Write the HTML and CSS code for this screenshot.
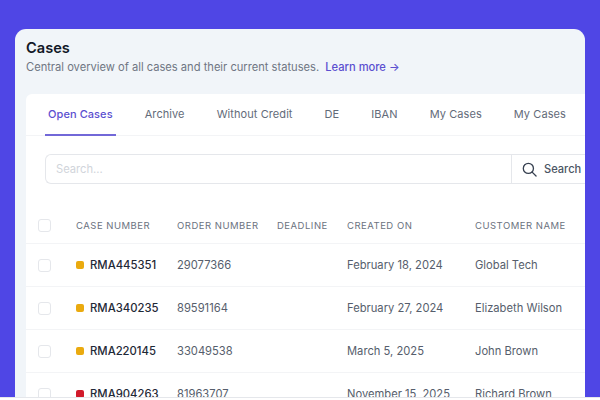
FILE: index.html
```html
<!DOCTYPE html>
<html lang="en">
<head>
<meta charset="utf-8">
<title>Cases</title>
<link rel="stylesheet" href="styles.css">
</head>
<body>
<div class="page">
<main class="panel">
  <header class="intro">
    <h1>Cases</h1>
    <p>Central overview of all cases and their current statuses. <a href="#">Learn more <span class="arrow">→</span></a></p>
  </header>
  <section class="card">
    <nav class="tabs">
      <a class="tab active" href="#">Open Cases</a>
      <a class="tab" href="#">Archive</a>
      <a class="tab" href="#">Without Credit</a>
      <a class="tab" href="#">DE</a>
      <a class="tab" href="#">IBAN</a>
      <a class="tab" href="#">My Cases</a>
      <a class="tab" href="#">My Cases</a>
    </nav>
    <div class="search">
      <div class="search-input">Search...</div>
      <button class="search-btn">
        <svg width="15" height="15" viewBox="0 0 16 16" fill="none" stroke="#374151" stroke-width="1.4" stroke-linecap="round"><circle cx="6.8" cy="6.8" r="5.4"/><path d="M10.8 10.8 15 15"/></svg>
        Search
      </button>
    </div>
    <div class="table">
      <div class="row head">
        <span class="c0"><i class="check"></i></span><span class="c1">CASE NUMBER</span><span class="c2">ORDER NUMBER</span><span class="c3">DEADLINE</span><span class="c4">CREATED ON</span><span class="c5">CUSTOMER NAME</span>
      </div>
      <div class="row">
        <span class="c0"><i class="check"></i></span><span class="c1 id"><i class="dot amber"></i>RMA445351</span><span class="c2">29077366</span><span class="c3"></span><span class="c4">February 18, 2024</span><span class="c5">Global Tech</span>
      </div>
      <div class="row">
        <span class="c0"><i class="check"></i></span><span class="c1 id"><i class="dot amber"></i>RMA340235</span><span class="c2">89591164</span><span class="c3"></span><span class="c4">February 27, 2024</span><span class="c5">Elizabeth Wilson</span>
      </div>
      <div class="row">
        <span class="c0"><i class="check"></i></span><span class="c1 id"><i class="dot amber"></i>RMA220145</span><span class="c2">33049538</span><span class="c3"></span><span class="c4">March 5, 2025</span><span class="c5">John Brown</span>
      </div>
      <div class="row">
        <span class="c0"><i class="check"></i></span><span class="c1 id"><i class="dot red"></i>RMA904263</span><span class="c2">81963707</span><span class="c3"></span><span class="c4">November 15, 2025</span><span class="c5">Richard Brown</span>
      </div>
    </div>
  </section>
</main>
</div>
</body>
</html>
```
FILE: styles.css
```css
* { box-sizing: border-box; }
html, body { margin: 0; height: 400px; overflow: hidden; }
body { background: #fff; font-family: Inter, "Liberation Sans", sans-serif; }
.page { height: 398px; background: #4f46e5; padding: 29px 15px 0; overflow: hidden; border-bottom: 1px solid #e5e7eb; }
.panel { width: 570px; height: 368px; background: #f1f5f9; border-radius: 11px 11px 0 0; overflow: hidden; padding: 11px 0 0 11px; }
h1 { margin: 0; font-size: 14.6px; line-height: 16px; font-weight: 600; color: #111827; }
.intro p { margin: 2px 0 0; font-size: 11.15px; line-height: 18px; color: #6f7683; white-space: nowrap; }
.intro a { color: #5b4fd0; font-weight: 500; margin-left: 3px; text-decoration: none; }
.card { margin-top: 18px; background: #fff; height: 304px; border-radius: 6px 0 0 0; overflow: hidden; }
.tabs { display: flex; height: 42px; border-bottom: 1px solid #f3f4f6; padding-left: 19px; }
.tab { font-size: 11px; letter-spacing: .08px; line-height: 41px; font-weight: 400; color: #636b79; text-decoration: none; padding: 0 3px; margin-right: 26px; white-space: nowrap; height: 42px; }
.tab.active { color: #5b4fd0; font-weight: 500; border-bottom: 2px solid #7268d8; }
.search { display: flex; margin: 18px 0 0 19px; height: 30px; border: 1px solid #e5e7eb; border-right: 0; border-radius: 6px 0 0 6px; }
.search-input { width: 466px; padding-left: 10px; font-size: 11.2px; line-height: 28px; color: #d1d5db; border-right: 1px solid #e5e7eb; }
.search-btn { flex: 1; display: flex; align-items: center; gap: 7px; padding: 0 0 0 10px; border: 0; background: none; font: 500 11.1px Inter, sans-serif; color: #4b5563; white-space: nowrap; }
.table { margin-top: 23px; }
.row { display: flex; align-items: center; height: 43px; border-bottom: 1px solid #f3f4f6; font-size: 11.2px; color: #565e6c; }
.row.head { height: 37px; font-size: 9.5px; letter-spacing: .5px; font-weight: 400; color: #6b7280; }
.check { display: block; width: 13px; height: 13px; border: 1px solid #e5e7eb; border-radius: 3px; background: #fff; }
.c0 { width: 50px; padding-left: 12px; }
.c1 { width: 101px; white-space: nowrap; }
.c2 { width: 100px; white-space: nowrap; }
.c3 { width: 70px; white-space: nowrap; }
.c4 { width: 128px; white-space: nowrap; }
.c5 { white-space: nowrap; }
.id { display: flex; align-items: center; color: #1f2937; font-weight: 500; font-size: 11.3px; }
.dot { width: 8px; height: 8px; border-radius: 2px; margin-right: 6px; flex: none; }
.amber { background: #eaaa0f; }
.red { background: #d11a2a; }
```
